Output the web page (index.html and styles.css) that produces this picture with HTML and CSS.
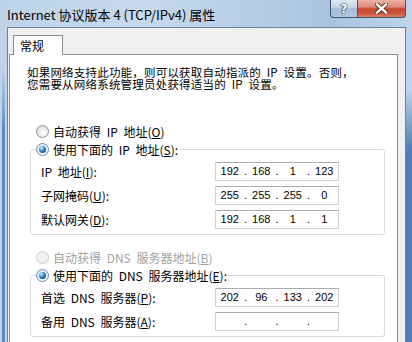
FILE: index.html
```html
<!DOCTYPE html>
<html lang="zh-CN">
<head>
<meta charset="utf-8">
<title>Internet 协议版本 4 (TCP/IPv4) 属性</title>
<link rel="stylesheet" href="styles.css">
</head>
<body>
<div class="win">
  <div class="titlebar">
    <span class="title">Internet 协议版本 4 (TCP/IPv4) 属性</span>
    <div class="caption-btns">
      <div class="cbtn help"><span class="qmark">?</span></div>
      <div class="cbtn close">
        <svg width="13" height="11" viewBox="0 0 13 11">
          <path d="M2 1.5 L11 9.5 M11 1.5 L2 9.5" stroke="#4a2a22" stroke-width="4.2" stroke-linecap="square" fill="none"/>
          <path d="M2 1.5 L11 9.5 M11 1.5 L2 9.5" stroke="#ffffff" stroke-width="2.4" stroke-linecap="square" fill="none"/>
        </svg>
      </div>
    </div>
  </div>
  <div class="client">
    <div class="tabs"><div class="tab">常规</div></div>
    <div class="panel">
      <p class="desc">如果网络支持此功能，则可以获取自动指派的 IP 设置。否则，</p>
      <p class="desc">您需要从网络系统管理员处获得适当的 IP 设置。</p>

      <div class="opt first"><span class="radio"></span><span>自动获得 IP 地址(<u>O</u>)</span></div>
      <fieldset class="group">
        <legend><span class="opt inlegend"><span class="radio checked"></span><span>使用下面的 IP 地址(<u>S</u>):</span></span></legend>
        <div class="field"><label>IP 地址(<u>I</u>):</label>
          <div class="ip"><span class="oct">192</span><span class="dot">.</span><span class="oct">168</span><span class="dot">.</span><span class="oct">1</span><span class="dot">.</span><span class="oct">123</span></div>
        </div>
        <div class="field"><label>子网掩码(<u>U</u>):</label>
          <div class="ip"><span class="oct">255</span><span class="dot">.</span><span class="oct">255</span><span class="dot">.</span><span class="oct">255</span><span class="dot">.</span><span class="oct">0</span></div>
        </div>
        <div class="field"><label>默认网关(<u>D</u>):</label>
          <div class="ip"><span class="oct">192</span><span class="dot">.</span><span class="oct">168</span><span class="dot">.</span><span class="oct">1</span><span class="dot">.</span><span class="oct">1</span></div>
        </div>
      </fieldset>

      <div class="opt second disabled"><span class="radio"></span><span>自动获得 DNS 服务器地址(<u>B</u>)</span></div>
      <fieldset class="group">
        <legend><span class="opt inlegend"><span class="radio checked"></span><span>使用下面的 DNS 服务器地址(<u>E</u>):</span></span></legend>
        <div class="field"><label>首选 DNS 服务器(<u>P</u>):</label>
          <div class="ip"><span class="oct">202</span><span class="dot">.</span><span class="oct">96</span><span class="dot">.</span><span class="oct">133</span><span class="dot">.</span><span class="oct">202</span></div>
        </div>
        <div class="field"><label>备用 DNS 服务器(<u>A</u>):</label>
          <div class="ip"><span class="oct"></span><span class="dot">.</span><span class="oct"></span><span class="dot">.</span><span class="oct"></span><span class="dot">.</span><span class="oct"></span></div>
        </div>
      </fieldset>
    </div>
  </div>
</div>
</body>
</html>
```
FILE: styles.css
```css
html, body {
  margin: 0;
  padding: 0;
}
body {
  width: 412px;
  height: 342px;
  overflow: hidden;
  font-family: "Noto Sans CJK SC", "Noto Sans", sans-serif;
  font-size: 12px;
  color: #000;
  background:
    linear-gradient(to bottom, rgba(88,138,192,0) 70px, #5b8cc1 130px) 2px 0 / 3px 100% no-repeat,
    linear-gradient(to bottom, rgba(70,122,180,0) 90px, #4b7fb7 150px) 406px 0 / 6px 100% no-repeat,
    linear-gradient(to right, #bed3ea 0, #c6d9ec 35%, #b6cde5 62%, #a9c3df 80%, #bfd4ea 100%);
}
.win {
  height: 342px;
  display: flex;
  flex-direction: column;
}
.titlebar {
  height: 27px;
  flex: none;
  display: flex;
  align-items: flex-start;
  padding: 0 6px 0 7px;
}
.title {
  margin-top: 7px;
  font-size: 13px;
  line-height: 16px;
  white-space: nowrap;
}
.caption-btns {
  margin-left: auto;
  display: flex;
}
.cbtn {
  height: 18px;
  box-sizing: border-box;
  border: 1px solid #3d5675;
  border-top: none;
  display: flex;
  align-items: center;
  justify-content: center;
}
.help {
  width: 28px;
  border-radius: 0 0 0 4px;
  background: linear-gradient(#dfe9f4, #c2d4e8 45%, #a3bddb 52%, #aec8e3 100%);
}
.qmark {
  font-family: "DejaVu Sans", sans-serif;
  font-weight: bold;
  font-size: 12px;
  line-height: 16px;
  color: #fff;
  text-shadow: 0 0 1px #1f3550, 0 0 1px #1f3550, 0 0 2px #2d4563;
}
.close {
  width: 48px;
  border-left: none;
  border-radius: 0 0 4px 0;
  background: linear-gradient(#edb3a6, #dc8b78 40%, #c9472f 52%, #cf563d 80%, #de8468 100%);
}
.client {
  flex: 1;
  display: flex;
  flex-direction: column;
  margin: 0 6px 0 7px;
  border: 1px solid #6c83a0;
  border-bottom: none;
  background: #f0f0f0;
  padding: 7px 7px 0 1px;
}
.tabs {
  display: flex;
  padding-left: 4px;
  margin-bottom: -1px;
  z-index: 1;
}
.tab {
  width: 50px;
  height: 20px;
  box-sizing: border-box;
  border: 1px solid #898c95;
  border-bottom: none;
  background: #fff;
  padding-left: 6px;
  line-height: 19px;
}
.panel {
  flex: 1;
  background: #fff;
  border: 1px solid #898c95;
  border-bottom: none;
  padding: 11px 0 0 17px;
  word-spacing: 3px;
}
.desc {
  margin: 0;
  height: 12px;
  line-height: 12px;
  font-size: 11.5px;
  white-space: nowrap;
  letter-spacing: 0.2px;
}
.opt {
  display: flex;
  align-items: center;
  height: 18px;
  gap: 4px;
  white-space: nowrap;
}
.opt.first {
  margin: 32px 0 0 9px;
}
.opt.second {
  margin: 13px 0 0 9px;
}
.opt.disabled {
  color: #a2a2a2;
}
.radio {
  width: 13px;
  height: 13px;
  box-sizing: border-box;
  border-radius: 50%;
  border: 1px solid #8d9093;
  background: radial-gradient(circle at 60% 65%, #ffffff 0, #f1f1f1 35%, #d2d2d2 100%);
  display: flex;
  align-items: center;
  justify-content: center;
  flex: none;
}
.disabled .radio {
  border-color: #c9cacb;
  background: #f2f2f2;
}
.radio.checked {
  border-color: #6c8fb6;
  background: radial-gradient(circle at 60% 65%, #ffffff 0, #eef4fa 40%, #cfdcea 100%);
}
.radio.checked::after {
  content: "";
  width: 7px;
  height: 7px;
  border-radius: 50%;
  background: radial-gradient(circle at 35% 30%, #d4efff 0, #64aee6 28%, #1d64a6 62%, #0d3c6f 100%);
}
.group {
  margin: 0 0 0 3px;
  width: 355px;
  min-width: 0;
  box-sizing: border-box;
  border: 1px solid #d5d9dd;
  border-radius: 3px;
  padding: 1px 0 3px 5px;
}
.group legend {
  padding: 0 2px 0 0;
  margin: 0;
}
.field {
  display: grid;
  grid-template-columns: 174px 124px;
  align-items: center;
  height: 24px;
  margin-left: 5px;
  white-space: nowrap;
}
.ip {
  display: flex;
  height: 19px;
  box-sizing: border-box;
  border: 1px solid #cdd1d7;
  border-top-color: #abadb3;
  background: #fff;
  font-family: "Liberation Sans", Arial, sans-serif;
  font-size: 11px;
  line-height: 17px;
  word-spacing: 0;
}
.oct {
  flex: 1;
  text-align: center;
}
.dot {
  width: 4px;
  text-align: center;
}
```
